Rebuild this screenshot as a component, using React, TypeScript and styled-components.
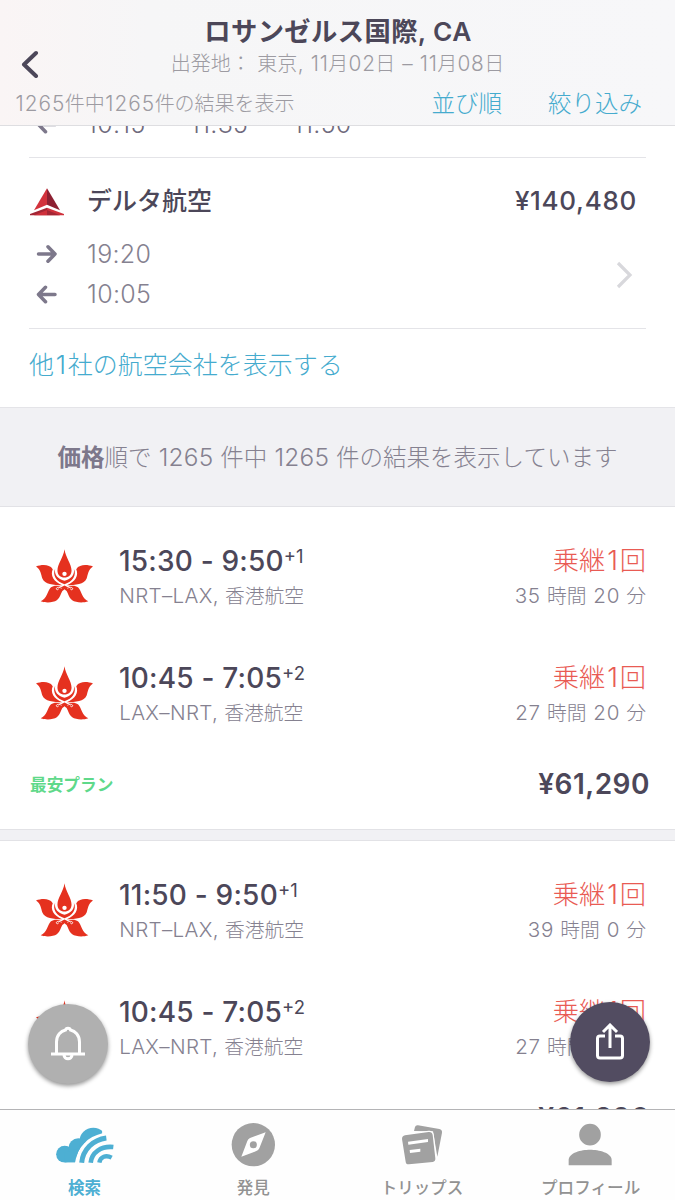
import React from "react";
import styled, { createGlobalStyle } from "styled-components";

const GlobalStyle = createGlobalStyle`
  * { box-sizing: border-box; }
  body {
    margin: 0;
    background: #fff;
    font-family: Inter, "Noto Sans CJK JP", sans-serif;
    color: #4c4759;
  }
`;

const Screen = styled.div`
  position: relative;
  width: 675px;
  height: 1200px;
  display: flex;
  flex-direction: column;
  overflow: hidden;
  background: #fff;
`;

interface TextProps {
  $size: number;
  $weight?: number;
  $color?: string;
  $spacing?: number;
  $line?: number;
}

const Text = styled.span<TextProps>`
  font-size: ${(p) => p.$size}px;
  font-weight: ${(p) => p.$weight ?? 400};
  color: ${(p) => p.$color ?? "#4c4759"};
  letter-spacing: ${(p) => p.$spacing ?? 0}px;
  line-height: ${(p) => (p.$line ? `${p.$line}px` : "normal")};
  white-space: nowrap;
`;

const Latin = styled.span<{ $spacing: number }>`
  font-size: 1.04em;
  font-weight: 350;
  letter-spacing: ${(p) => p.$spacing}px;
  margin: 0 ${(p) => -p.$spacing / 2}px 0 ${(p) => p.$spacing / 2}px;
`;

/* Japanese copy whose digits and Latin letters are set slightly wider. */
const MixedText = ({ children, $latin = 0.7, ...rest }: TextProps & { children: string; $latin?: number }) => (
  <Text {...rest}>
    {children.split(/([\x20-\x7e–]+)/).map((part, i) =>
      i % 2 ? (
        <Latin key={i} $spacing={$latin}>
          {part}
        </Latin>
      ) : (
        part
      ),
    )}
  </Text>
);

const muted = "#858190";
const headerGrey = "#9d9ba2";
const cyan = "#45abce";

/* Header */

const Header = styled.header`
  flex: none;
  height: 126px;
  padding: 12px 33px 0 15px;
  display: grid;
  grid-template-rows: 35px 32px 1fr;
  border-bottom: 1px solid #dedee1;
  background: linear-gradient(90deg, #faf5f5 0%, #f6f6f7 22%, #f7f7f9 100%);
`;

const TitleRow = styled.div`
  display: flex;
  justify-content: center;
  align-items: center;
  padding-left: 19px;
`;

const SubtitleRow = styled.div`
  display: grid;
  grid-template-columns: 32px 1fr 14px;
  align-items: center;
`;

const Centered = styled.div`
  display: flex;
  justify-content: center;
  padding-bottom: 2px;
`;

const BackButton = styled.button`
  width: 32px;
  height: 30px;
  padding: 2px 0 0 5px;
  border: 0;
  background: none;
  display: flex;
  align-items: center;
`;

const FilterRow = styled.div`
  display: flex;
  align-items: center;
`;

const FilterActions = styled.div`
  margin-left: auto;
  display: flex;
  gap: 46px;
`;

/* Results list */

const Results = styled.main`
  flex: 1;
  min-height: 0;
  overflow: hidden;
  display: flex;
  flex-direction: column;
  background: #f1f1f4;
`;

const AirlineSummary = styled.section`
  flex: none;
  height: 281px;
  padding: 0 29px;
  display: flex;
  flex-direction: column;
  background: #fff;
`;

const PreviousAirline = styled.div`
  height: 32px;
  display: flex;
  align-items: flex-end;
  padding: 0 0 17px 7px;
  border-bottom: 1px solid #e4e4e8;
`;

const PreviousTimes = styled.div`
  display: grid;
  grid-template-columns: 51px 103px 103px 1fr;
  height: 32px;
  align-items: center;
`;

const Airline = styled.div`
  height: 171px;
  display: grid;
  grid-template-columns: 58px 1fr 32px;
  grid-template-rows: 76px 39px 41px;
  align-items: center;
  border-bottom: 1px solid #e4e4e8;
`;

const AirlineHeading = styled.div`
  grid-column: 2 / 4;
  display: flex;
  justify-content: space-between;
  align-items: center;
  padding: 9px 9px 0 0;
`;

const LogoCell = styled.div`
  padding: 12px 0 0 1px;
  line-height: 0;
`;

const ArrowCell = styled.div`
  padding-left: 7px;
  line-height: 0;
`;

const DisclosureCell = styled.div`
  grid-column: 3;
  grid-row: 2 / 4;
  padding: 2px 0 0 0;
  line-height: 0;
`;

const ShowMore = styled.a`
  flex: 1;
  display: flex;
  align-items: center;
  padding-bottom: 11px;
`;

const SortNotice = styled.div`
  flex: none;
  height: 100px;
  padding-bottom: 2px;
  display: flex;
  align-items: center;
  justify-content: center;
  border-top: 1px solid #e4e4e8;
  border-bottom: 1px solid #e0e0e4;
`;

const Itinerary = styled.article`
  flex: none;
  height: 322px;
  margin-bottom: 12px;
  padding: 36px 25px 0 36px;
  display: flex;
  flex-direction: column;
  background: #fff;
  box-shadow: 0 0 0 1px #e2e2e6;
`;

const Leg = styled.div`
  height: 70px;
  margin-bottom: 47px;
  display: grid;
  grid-template-columns: 83px 1fr auto;
  padding-right: 4px;
`;

const LegLogo = styled.div`
  padding-top: 6px;
  line-height: 0;
`;

const Lines = styled.div<{ $end?: boolean }>`
  display: grid;
  grid-template-rows: 36px 34px;
  justify-items: ${(p) => (p.$end ? "end" : "start")};
`;

const TimeLine = styled.div`
  display: flex;
  align-items: flex-start;
`;

const ItineraryFooter = styled.div`
  height: 40px;
  margin: -13px 0 0 -6px;
  display: flex;
  align-items: center;
  justify-content: space-between;
`;

/* Floating buttons */

const FloatingButton = styled.button<{ $side: "left" | "right" }>`
  position: absolute;
  top: ${(p) => (p.$side === "left" ? 1004 : 1002)}px;
  ${(p) => (p.$side === "left" ? "left: 28px;" : "right: 25px;")}
  width: 80px;
  height: 80px;
  padding: 0;
  border: 0;
  border-radius: 50%;
  display: flex;
  align-items: center;
  justify-content: center;
  background: ${(p) => (p.$side === "left" ? "#b0b0b0" : "#524c61")};
  box-shadow: 0 2px 4px rgba(0, 0, 0, 0.42);
`;

/* Tab bar */

const TabBar = styled.nav`
  flex: none;
  height: 91px;
  display: grid;
  grid-template-columns: repeat(4, 1fr);
  border-top: 1px solid #b4b4b6;
  background: #fefefe;
`;

const Tab = styled.div`
  display: grid;
  grid-template-rows: 65px 24px;
  justify-items: center;
  align-items: center;
`;

const TabIcon = styled.svg`
  display: block;
  width: 66px;
  height: 48px;
  margin-top: 5px;
`;

const ArrowIcon = ({ back }: { back?: boolean }) => (
  <svg width="22" height="20" viewBox="0 0 22 20" fill="none" stroke="#7d788b" strokeWidth="3.5" strokeLinecap="round" strokeLinejoin="round">
    {back ? <path d="M19 10.500H3M9.500 3.300L2.500 10.500l7 7.200" /> : <path d="M2.500 10H19M12 2.800L19 10l-7 7.200" />}
  </svg>
);

const DeltaLogo = () => (
  <svg width="34" height="28" viewBox="0 0 102 82">
    <path d="M51 0L12 66L51 49Z" fill="#d2323c" />
    <path d="M51 0L90 66L51 49Z" fill="#8d2032" />
    <path d="M51 58L0 77V81H51Z" fill="#a32635" />
    <path d="M51 65L12 81H51Z" fill="#cf303b" />
    <path d="M51 58L102 77V81H51Z" fill="#cf303b" />
    <path d="M51 65L90 81H51Z" fill="#a32635" />
  </svg>
);

const OrchidLogo = () => (
  <svg width="57" height="54" viewBox="0 0 170 161" fill="#e5311f">
    <path d="M85 1C88 25 106 45 106 64C106 77 97 85 85 85S64 77 64 64C64 45 82 25 85 1Z" />
    <circle cx="85" cy="74" r="6.500" fill="#fff" />
    <path d="M57 59C48 78 61 98 85 105C109 98 122 78 113 59C116 77 105 90 85 95C65 90 54 77 57 59Z" />
    <path d="M0 52C16 47 39 44 50 60C42 78 52 97 78 108C52 108 26 105 19 88C15 75 14 61 0 52Z" />
    <path d="M170 52C154 47 131 44 120 60C128 78 118 97 92 108C118 108 144 105 151 88C155 75 156 61 170 52Z" />
    <path d="M82 120C74 109 56 106 44 115C34 126 33 148 14 156C30 162 52 160 62 153C74 143 74 130 82 120Z" />
    <path d="M88 120C96 109 114 106 126 115C136 126 137 148 156 156C140 162 118 160 108 153C96 143 96 130 88 120Z" />
    <path d="M78 118C70 112 58 114 61 120C63 123 68 121 67 118M92 118C100 112 112 114 109 120C107 123 102 121 103 118" fill="none" stroke="#fff" strokeWidth="2.600" />
    <path d="M85 109L95 114L91 125L85 120L79 125L75 114Z" />
  </svg>
);

interface LegData {
  time: string;
  days: string;
  route: string;
  duration: string;
}

const FlightLeg = ({ time, days, route, duration }: LegData) => (
  <Leg>
    <LegLogo>
      <OrchidLogo />
    </LegLogo>
    <Lines>
      <TimeLine>
        <Text $size={28} $weight={500} $spacing={0.2} $line={36}>{time}</Text>
        <Text $size={18.500} $line={26}>{days}</Text>
      </TimeLine>
      <MixedText $size={19.800} $weight={300} $color={muted} $line={34} $latin={0.35}>{route}</MixedText>
    </Lines>
    <Lines $end>
      <MixedText $size={26.300} $weight={300} $color="#e95b54" $line={36} $latin={3.6}>乗継1回</MixedText>
      <MixedText $size={19.800} $weight={300} $color={muted} $line={34}>{duration}</MixedText>
    </Lines>
  </Leg>
);

const itineraries: { legs: LegData[]; badge?: string; price: string }[] = [
  {
    legs: [
      { time: "15:30 - 9:50", days: "+1", route: "NRT–LAX, 香港航空", duration: "35 時間 20 分" },
      { time: "10:45 - 7:05", days: "+2", route: "LAX–NRT, 香港航空", duration: "27 時間 20 分" },
    ],
    badge: "最安プラン",
    price: "¥61,290",
  },
  {
    legs: [
      { time: "11:50 - 9:50", days: "+1", route: "NRT–LAX, 香港航空", duration: "39 時間 0 分" },
      { time: "10:45 - 7:05", days: "+2", route: "LAX–NRT, 香港航空", duration: "27 時間 20 分" },
    ],
    price: "¥61,290",
  },
];

export default function App() {
  return (
    <>
      <GlobalStyle />
      <Screen>
        <Header>
          <TitleRow>
            <Text $size={26.300} $weight={600} $spacing={0.4}>ロサンゼルス国際, CA</Text>
          </TitleRow>
          <SubtitleRow>
            <BackButton aria-label="戻る">
              <svg width="20" height="28" viewBox="0 0 20 28" fill="none" stroke="#4c4759" strokeWidth="4" strokeLinecap="round" strokeLinejoin="round">
                <path d="M16 3L4 14.500L16 26" />
              </svg>
            </BackButton>
            <Centered>
              <MixedText $size={20} $weight={300} $color={headerGrey} $latin={0.7}>出発地： 東京, 11月02日 – 11月08日</MixedText>
            </Centered>
          </SubtitleRow>
          <FilterRow>
            <MixedText $size={20} $weight={300} $color={headerGrey} $latin={1}>1265件中1265件の結果を表示</MixedText>
            <FilterActions>
              <Text $size={23.500} $weight={300} $color={cyan}>並び順</Text>
              <Text $size={23.500} $weight={300} $color={cyan}>絞り込み</Text>
            </FilterActions>
          </FilterRow>
        </Header>

        <Results>
          <AirlineSummary>
            <PreviousAirline>
              <PreviousTimes>
                <ArrowIcon back />
                <Text $size={25} $weight={350} $spacing={0.3} $color="#6f6a7d">10:15</Text>
                <Text $size={25} $weight={350} $spacing={0.3} $color="#6f6a7d">11:35</Text>
                <Text $size={25} $weight={350} $spacing={0.3} $color="#6f6a7d">11:50</Text>
              </PreviousTimes>
            </PreviousAirline>
            <Airline>
              <LogoCell>
                <DeltaLogo />
              </LogoCell>
              <AirlineHeading>
                <Text $size={25} $weight={500} $line={38}>デルタ航空</Text>
                <Text $size={26} $weight={500} $spacing={0.7} $line={38}>¥140,480</Text>
              </AirlineHeading>
              <ArrowCell>
                <ArrowIcon />
              </ArrowCell>
              <Text $size={25} $weight={350} $spacing={0.3} $color={muted}>19:20</Text>
              <ArrowCell>
                <ArrowIcon back />
              </ArrowCell>
              <Text $size={25} $weight={350} $spacing={0.3} $color={muted}>10:05</Text>
              <DisclosureCell>
                <svg width="20" height="30" viewBox="0 0 20 30" fill="none" stroke="#d8d8dc" strokeWidth="3.200">
                  <path d="M4 3L16 15L4 27" />
                </svg>
              </DisclosureCell>
            </Airline>
            <ShowMore>
              <MixedText $size={25} $weight={300} $color={cyan} $latin={3.6}>他1社の航空会社を表示する</MixedText>
            </ShowMore>
          </AirlineSummary>

          <SortNotice>
            <Text $size={23.500} $weight={700} $color="#7d788b">価格</Text>
            <MixedText $size={23.500} $weight={300} $color={muted} $latin={0.2}>順で 1265 件中 1265 件の結果を表示しています</MixedText>
          </SortNotice>

          {itineraries.map((item, i) => (
            <Itinerary key={i}>
              {item.legs.map((leg, j) => (
                <FlightLeg key={j} {...leg} />
              ))}
              <ItineraryFooter>
                <Text $size={16.700} $weight={700} $color="#5fd98a">{item.badge}</Text>
                <Text $size={28} $weight={600} $spacing={0.5}>{item.price}</Text>
              </ItineraryFooter>
            </Itinerary>
          ))}
        </Results>

        <TabBar>
          <Tab>
            <TabIcon viewBox="152 424 198 144">
              <clipPath id="cloud">
                <path d="M160 430H306V461C262 472 232 500 224 549H160Z" />
              </clipPath>
              <g fill="#4dafd3" clipPath="url(#cloud)">
                <circle cx="193" cy="524" r="25.500" />
                <circle cx="234" cy="506" r="30" />
                <circle cx="279" cy="486" r="42" />
                <path d="M193 549V520L280 490L240 549Z" />
              </g>
              <g fill="none" stroke="#4dafd3">
                <path d="M244 549C248 510 278 480 318 475" strokeWidth="15" />
                <path d="M271 549C274 519 302 498 339 502" strokeWidth="14" />
                <path d="M297 549C300 531 317 525 334 534" strokeWidth="13" />
              </g>
            </TabIcon>
            <Text $size={16.500} $weight={700} $color="#4dafd3">検索</Text>
          </Tab>
          <Tab>
            <TabIcon viewBox="661 424 198 144">
              <circle cx="761" cy="495" r="65" fill="#a1a1a1" />
              <path d="M798 458L779 506Q776 512 770 514L725 531L743 484Q745 478 751 475Z" fill="#fff" />
              <circle cx="761" cy="495" r="10.500" fill="#a1a1a1" />
            </TabIcon>
            <Text $size={16.500} $weight={500} $color="#929292">発見</Text>
          </Tab>
          <Tab>
            <TabIcon viewBox="153 424 198 144">
              <path d="M240 437L304 448Q313 450 312 459L298 531L285 455L228 454L231 442Q233 436 240 437Z" fill="#a1a1a1" />
              <path d="M201 467L272 457Q282 456 284 466L292 536Q293 545 284 547L213 554Q204 555 203 546L192 478Q192 469 201 467Z" fill="#a1a1a1" stroke="#fff" strokeWidth="7" paintOrder="stroke" />
              <path d="M210 486L270 478V487L211 495ZM215 511L247 507V516L216 520Z" fill="#fff" />
            </TabIcon>
            <Text $size={16.500} $weight={500} $color="#929292">トリップス</Text>
          </Tab>
          <Tab>
            <TabIcon viewBox="658 424 198 144">
              <circle cx="754" cy="465" r="32.500" fill="#a1a1a1" />
              <path d="M690 557V541C690 519 728 510 754 510S819 519 819 541V557Z" fill="#a1a1a1" />
            </TabIcon>
            <Text $size={16.600} $weight={500} $color="#929292">プロフィール</Text>
          </Tab>
        </TabBar>

        <FloatingButton $side="left" aria-label="通知">
          <svg width="36" height="36" viewBox="0 0 36 36" fill="none" stroke="#fff" strokeWidth="3">
            <path d="M1 28H35M6.500 28V16C6.500 9 11 5 15.500 4C16 1.500 20 1.500 20.500 4C25 5 29.500 9 29.500 16V28M14 29C14 34 22 34 22 29" />
          </svg>
        </FloatingButton>
        <FloatingButton $side="right" aria-label="共有">
          <svg width="32" height="38" viewBox="0 0 32 38" fill="none" stroke="#fff" strokeWidth="3">
            <path d="M11 13H6Q3.500 13 3.500 15.500V32.500Q3.500 35 6 35H26Q28.500 35 28.500 32.500V15.500Q28.500 13 26 13H21M16 25V2.500M9 9L16 2L23 9" />
          </svg>
        </FloatingButton>
      </Screen>
    </>
  );
}
